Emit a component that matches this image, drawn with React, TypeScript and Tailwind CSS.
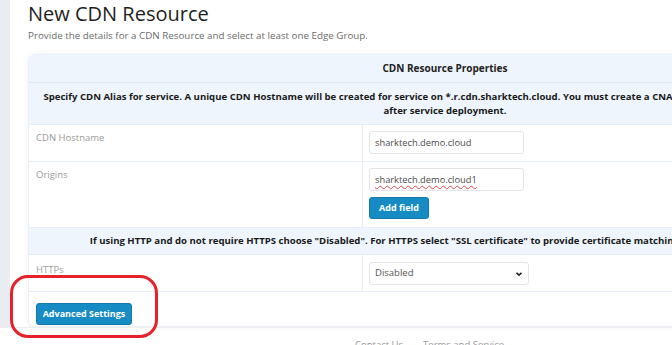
import { useState } from "react";

const font = { fontFamily: '"Open Sans", "Liberation Sans", sans-serif' };

const Field = ({ value, typo }: { value: string; typo?: boolean }) => (
  <div className="flex h-[23px] w-[155px] items-center rounded-[3px] border border-[#e1e5ea] bg-white px-[5px] text-[9.3px] text-[#4a4a4a]">
    {typo ? (
      <span className="underline decoration-wavy decoration-[#e0474c] decoration-1 underline-offset-2">
        {value}
      </span>
    ) : (
      value
    )}
  </div>
);

const App = () => {
  const [origins] = useState(["sharktech.demo.cloud1"]);

  return (
    <div className="relative flex h-[345px] w-[672px] flex-col overflow-hidden bg-white" style={font}>
      <div className="flex h-[327px] shrink-0">
        {/* sidebar edge */}
        <div className="w-[10px] shrink-0 bg-[#e9edf1]" />

        <main className="flex-1 pl-[18px]">
          <h1 className="pt-[1px] text-[20px] leading-[26px] text-[#1e1e1e]">New CDN Resource</h1>
          <p className="mt-[2px] text-[9.8px] leading-[14px] text-[#6b6b6b]">
            Provide the details for a CDN Resource and select at least one Edge Group.
          </p>

          {/* card */}
          <div className="mt-[11px] w-[834px] rounded-t-[8px] rounded-b-[6px] border border-[#eceff3] bg-white shadow-[0_0_6px_rgba(0,0,0,0.06)]">
            <div className="flex h-[28px] items-center justify-center rounded-t-[8px] border-b border-[#dfe7ef] bg-[#eef5fd] text-[10px] font-bold text-[#222]">
              CDN Resource Properties
            </div>
            <div className="flex h-[42px] items-center justify-center border-b border-[#e3ebf3] bg-[#eef5fd] text-center text-[9.6px] font-bold leading-[14px] text-[#1a1a1a] whitespace-nowrap">
              <p>
                Specify CDN Alias for service. A unique CDN Hostname will be created for service on
                *.r.cdn.sharktech.cloud. You must create a CNAME record pointing to the Hostname
                <br />
                after service deployment.
              </p>
            </div>

            <div className="flex h-[37px] border-b border-[#e6edf4]">
              <div className="w-[334px] shrink-0 border-r border-[#e6edf4] pl-[7px] pt-[6px] text-[9.5px] text-[#9a9a9a]">
                CDN Hostname
              </div>
              <div className="pl-[6px] pt-[6px]">
                <Field value="sharktech.demo.cloud" />
              </div>
            </div>

            <div className="flex h-[66px] border-b border-[#e6edf4]">
              <div className="w-[334px] shrink-0 border-r border-[#e6edf4] pl-[7px] pt-[6px] text-[9.5px] text-[#9a9a9a]">
                Origins
              </div>
              <div className="flex flex-col gap-[6px] pl-[6px] pt-[6px]">
                {origins.map((o) => (
                  <Field key={o} value={o} typo />
                ))}
                <button className="h-[22px] w-[60px] rounded-[3px] border border-[#1479ac] bg-[#178cc4] text-[9px] font-bold text-white">
                  Add field
                </button>
              </div>
            </div>

            <div className="flex h-[27px] items-center justify-center border-b border-[#e3ebf3] bg-[#eef5fd] text-[9.6px] font-bold text-[#1a1a1a] whitespace-nowrap">
              If using HTTP and do not require HTTPS choose "Disabled". For HTTPS select "SSL certificate" to
              provide certificate matching the CDN Alias hostname.
            </div>

            <div className="flex h-[37px] border-b border-[#e6edf4]">
              <div className="w-[334px] shrink-0 border-r border-[#e6edf4] pl-[7px] pt-[8px] text-[9.5px] text-[#a0a0a0]">
                HTTPs
              </div>
              <div className="pl-[6px] pt-[7px]">
                <div className="flex h-[23px] w-[160px] items-center justify-between rounded-[3px] border border-[#e1e5ea] bg-white pl-[5px] pr-[5px] text-[9.5px] text-[#555]">
                  <span>Disabled</span>
                  <svg width="8" height="6" viewBox="0 0 8 6">
                    <path d="M1.5 1.8 L4 4.2 L6.5 1.8" fill="none" stroke="#222" strokeWidth="1.6" />
                  </svg>
                </div>
              </div>
            </div>

            <div className="h-[34px] pl-[7px] pt-[7px]">
              <button className="h-[22px] w-[96px] rounded-[3px] border border-[#1479ac] bg-[#178cc4] text-[9px] font-bold text-white">
                Advanced Settings
              </button>
            </div>
          </div>
        </main>
      </div>

      {/* footer */}
      <footer className="flex flex-1 gap-[20px] border-t border-[#eceef1] pl-[355px] pt-[10px] text-[9.5px] text-[#9a9a9a]">
        <span>Contact Us</span>
        <span>Terms and Service</span>
      </footer>

      {/* red annotation */}
      <div className="pointer-events-none absolute left-[10px] top-[275px] h-[63px] w-[148px] rounded-[18px] border-[3px] border-[#e8202a]" />
    </div>
  );
};

export default App;
